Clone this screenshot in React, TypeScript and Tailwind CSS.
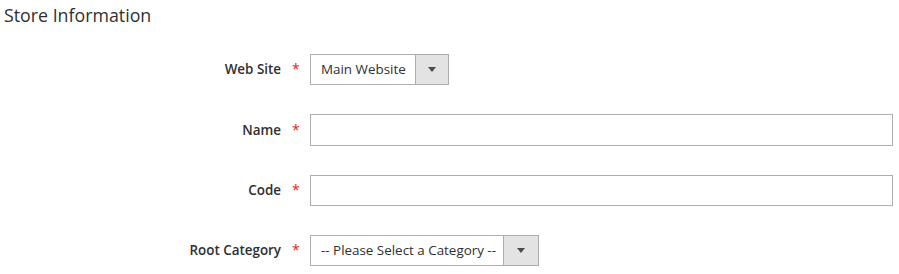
import React from "react";

function Caret() {
  return (
    <svg width="8" height="5" viewBox="0 0 8 5" className="block">
      <path d="M0 0 L8 0 L4 5 Z" fill="#514943" />
    </svg>
  );
}

function Label({ text }: { text: string }) {
  return (
    <div className="w-[302px] shrink-0 flex justify-end items-center pr-[2px]">
      <span className="text-[13.4px] font-semibold text-[#303030]">{text}</span>
      <span className="ml-[11px] w-[8px] text-[14px] text-[#e22626] leading-none">*</span>
    </div>
  );
}

function Select({ text, width, btn }: { text: string; width: string; btn: string }) {
  return (
    <div className={`flex h-[31px] border border-[#adadad] bg-white ${width}`}>
      <div className="flex-1 flex items-center pl-[10px] text-[13.4px] text-[#303030] whitespace-nowrap">{text}</div>
      <div className={`${btn} bg-[#e3e3e3] border-l border-[#adadad] flex items-center justify-center`}>
        <Caret />
      </div>
    </div>
  );
}

export default function App() {
  return (
    <div className="w-[899px] h-[274px] bg-white font-['Open_Sans',sans-serif] overflow-hidden">
      <div className="pl-[4px] pt-[2px] text-[17.8px] text-[#303030] leading-[26px]">Store Information</div>
      <div className="flex flex-col gap-[29px] mt-[26px] pr-[6px]">
        <div className="flex items-center gap-[8px]">
          <Label text="Web Site" />
          <Select text="Main Website" width="w-[139px]" btn="w-[33px]" />
        </div>
        <div className="flex items-center gap-[8px]">
          <Label text="Name" />
          <div className="flex-1 h-[32px] border border-[#adadad] bg-white" />
        </div>
        <div className="flex items-center gap-[8px]">
          <Label text="Code" />
          <div className="flex-1 h-[31px] border border-[#adadad] bg-white" />
        </div>
        <div className="flex items-center gap-[8px]">
          <Label text="Root Category" />
          <Select text="-- Please Select a Category --" width="w-[229px]" btn="w-[35px]" />
        </div>
      </div>
    </div>
  );
}
